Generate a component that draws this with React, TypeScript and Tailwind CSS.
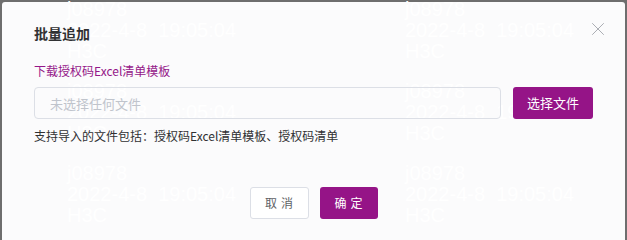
import { X } from 'lucide-react';

const WATERMARKS = [
  { top: -3, left: 65 },
  { top: -3, left: 403 },
  { top: 79, left: 65 },
  { top: 79, left: 403 },
  { top: 161, left: 65 },
  { top: 161, left: 403 },
];

const FONT = "font-['Microsoft_YaHei','Noto_Sans_CJK_SC',sans-serif]";

export default function App() {
  return (
    <div className="h-[240px] w-[627px] overflow-hidden bg-[#6e6e6e] pl-[2px] pt-[2px]">
      <div className={`relative h-[260px] w-[623px] rounded-[3px] bg-[#fbfbfc] ${FONT}`}>
        {/* watermark */}
        {WATERMARKS.map((w, i) => (
          <div
            key={i}
            className="pointer-events-none absolute font-['Liberation_Sans',sans-serif] text-[20px] leading-[21px] text-white"
            style={{ top: w.top, left: w.left }}
          >
            <div>j08978</div>
            <div className="whitespace-pre">2022-4-8  19:05:04</div>
            <div>H3C</div>
          </div>
        ))}

        <button className="absolute right-[16px] top-[16px] text-[#a3a6ad]">
          <X size={22} strokeWidth={1} />
        </button>

        <div className="relative px-[32px] pt-[21px]">
          <h3 className="text-[14px] font-bold leading-5 text-[#303133]">批量追加</h3>

          <a href="#" className="mt-[19px] block text-[12px] leading-[18px] text-[#951789]">
            下载授权码Excel清单模板
          </a>

          <div className="mt-[7px] flex items-center gap-[12px]">
            <input
              readOnly
              placeholder="未选择任何文件"
              className="h-[32px] w-[468px] rounded-[4px] border border-[#dcdfe6] bg-transparent px-[15px] text-[13px] placeholder:text-[#c0c4cc] focus:outline-none"
            />
            <button className="h-[32px] w-[80px] rounded-[3px] bg-[#951487] text-[13px] text-white">
              选择文件
            </button>
          </div>

          <p className="mt-[8px] text-[12px] leading-[18px] text-[#303133]">
            支持导入的文件包括：授权码Excel清单模板、授权码清单
          </p>

          <div className="mt-[42px] flex justify-center gap-[11px]">
            <button className="h-[32px] w-[59px] rounded-[3px] border border-[#dcdfe6] bg-white text-[12px] tracking-[4px] text-[#606266]">
              <span className="-mr-[4px]">取消</span>
            </button>
            <button className="h-[32px] w-[58px] rounded-[3px] bg-[#951487] text-[12px] tracking-[4px] text-white">
              <span className="-mr-[4px]">确定</span>
            </button>
          </div>
        </div>
      </div>
    </div>
  );
}
